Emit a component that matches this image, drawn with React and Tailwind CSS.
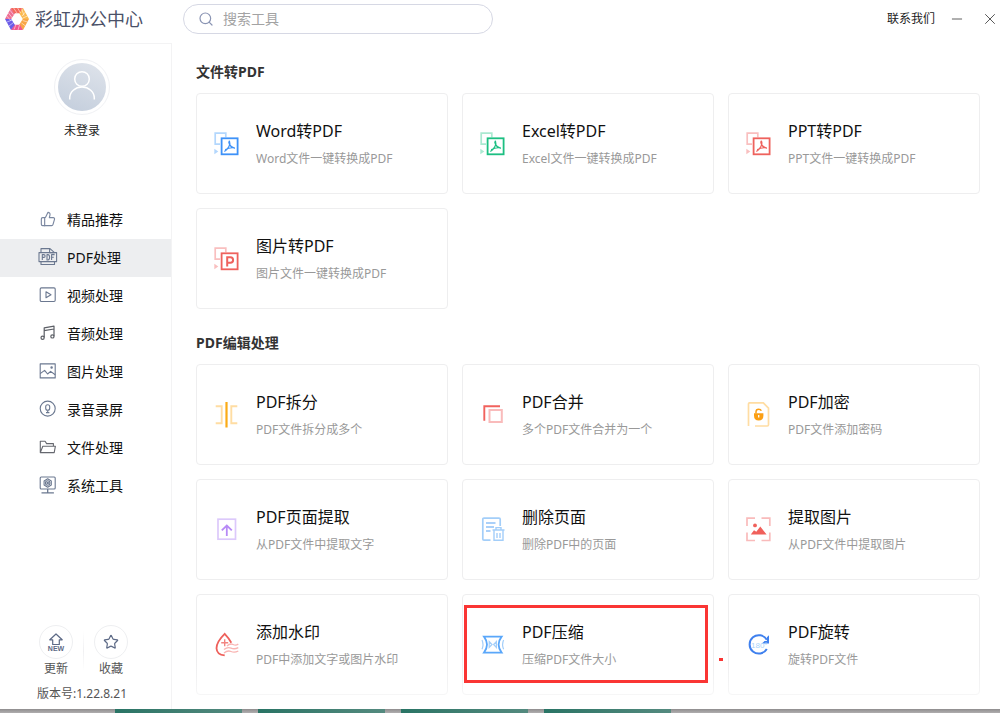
import { Minus, Search, Star, ThumbsUp, X } from 'lucide-react'

/* ── Sidebar icons ─────────────────────────────────────────────────────── */
function NavSvg({ children, color = '#6b7890' }) {
  return (
    <svg width="20" height="20" viewBox="0 0 20 20" fill="none" stroke={color} strokeWidth="1.1"
      strokeLinejoin="round" className="shrink-0" aria-hidden="true">
      {children}
    </svg>
  )
}

const LikeIcon = () => (
  <span className="flex w-5 shrink-0 justify-center">
    <ThumbsUp size={16} strokeWidth={1.7} color="#7a87a0" aria-hidden="true" />
  </span>
)

const PdfIcon = () => (
  <NavSvg>
    <path d="M3 5.5V1.6h9l4.5 4M11.6 1.6v4h5M3 14.5v3h13.5v-3M3 5.5h13.5" />
    <rect x="1" y="5.6" width="17.6" height="9" />
    <path d="M4.3 13V7.6h1.5q1.3 0 1.3 1.4t-1.3 1.4H4.3M9 7.6V13h1q1.6-.2 1.6-2.7T10 7.6zM13.6 13V7.6h3M13.6 10.2h2.2" />
  </NavSvg>
)

const VideoIcon = () => (
  <NavSvg>
    <rect x="2.2" y="2.9" width="15" height="13.6" rx="1.2" />
    <path d="M8 6.8v6l5-3z" />
  </NavSvg>
)

const MusicIcon = () => (
  <NavSvg color="#5c5f66">
    <path d="M6.2 14.6V4.8L16 3.2v10M6.2 7.6L16 6" strokeWidth="1.2" />
    <circle cx="4.6" cy="14.8" r="1.6" strokeWidth="1.2" />
    <circle cx="14.4" cy="13.4" r="1.6" strokeWidth="1.2" />
  </NavSvg>
)

const ImageIcon = () => (
  <NavSvg>
    <rect x="2.2" y="2.9" width="15" height="14" />
    <path d="M2.2 12.6 6.6 9.4l3 3.6 3-2.6 4.6 3.4" />
    <circle cx="13.6" cy="6.4" r=".7" />
  </NavSvg>
)

const MicIcon = () => (
  <NavSvg>
    <circle cx="9.7" cy="9.6" r="7.5" />
    <rect x="7.7" y="5.8" width="4" height="5.4" rx="2" />
    <path d="M9.7 11.6V14M8 13.6h3.4" />
  </NavSvg>
)

const FolderIcon = () => (
  <NavSvg color="#66686f">
    <path d="M2.3 15.6V4.2h4.8l1.5 2.4h6.8v2.6M2.3 15.6 4.8 9.2h12.6l-1.2 6.4z" />
  </NavSvg>
)

const SystemIcon = () => (
  <NavSvg>
    <rect x="2.2" y="2" width="15" height="12" rx="1" />
    <path d="M9.7 3.8l3.6 2.1v4.2l-3.6 2.1-3.6-2.1V5.9z" />
    <circle cx="9.7" cy="8" r="2.2" />
    <circle cx="9.7" cy="8" r=".7" />
    <path d="M9.7 14v3.6M3.5 17.8h12.4" strokeWidth="1.3" />
  </NavSvg>
)

/* ── Card icons ────────────────────────────────────────────────────────── */
function CardSvg({ children }) {
  return (
    <svg width="26" height="26" viewBox="0 0 26 26" fill="none" className="shrink-0" aria-hidden="true">
      {children}
    </svg>
  )
}

function ConvertIcon({ dark, light, letter }) {
  return (
    <CardSvg>
      <path d="M7 13.2H2.2v-11h10.6v4" stroke={light} strokeWidth="1.7" />
      <path d="M1.3 17.8v5.4l4-2.7z" fill={light} />
      <rect x="8.6" y="7.3" width="16" height="16" stroke={dark} strokeWidth="1.8" />
      {letter ? (
        <path d="M14.2 20.6v-9.4h3.2q2.7 0 2.7 2.8t-2.7 2.8h-3.2" stroke={dark} strokeWidth="2" />
      ) : (
        <path d="M16.2 10.2q-.9 1.2.3 3.2 1.7 3.2 5 3.7M16.5 10.2q1 2.200-.6 5.400-1.500 3-4.200 4.600M12.600 18.600q3.800-2.400 8.800-1.700"
          stroke={dark} strokeWidth="1.2" strokeLinecap="round" />
      )}
    </CardSvg>
  )
}

const SplitIcon = () => (
  <CardSvg>
    <path d="M2.7 4.2h6v17h-6M24.3 4.2h-6v17h6" stroke="#ffdda3" strokeWidth="1.9" />
    <path d="M13.5 0v25.500" stroke="#fbab15" strokeWidth="2.2" />
  </CardSvg>
)

const MergeIcon = () => (
  <CardSvg>
    <path d="M5.3 18.7V4.2H21" stroke="#f1625d" strokeWidth="1.9" />
    <rect x="10.5" y="8" width="12.3" height="12" stroke="#f9bbbb" strokeWidth="2" />
  </CardSvg>
)

const LockIcon = () => (
  <CardSvg>
    <path d="M3.5 24V2q0-1.2 1.2-1.2h13.600l5.200 5.400v16.600q0 1.200-1.200 1.200H10" stroke="#ffdda3" strokeWidth="1.7" />
    <path d="M9 11.3h9.4v2.4q0 4.7-4.7 4.7T9 13.7z" fill="#fb9f14" />
    <path d="M11 11.5V9.8q0-2.6 2.7-2.6 2 0 2.6 1.6" stroke="#fb9f14" strokeWidth="1.5" />
    <path d="M13.7 13v2.6" stroke="#fff" strokeWidth="1.3" />
  </CardSvg>
)

const PageExtractIcon = () => (
  <CardSvg>
    <rect x="5" y="2.2" width="17.5" height="20" stroke="#dcc9fb" strokeWidth="1.7" />
    <path d="M13.8 19V8.600M8.800 13.400l5-4.900 5 4.900" stroke="#b78af6" strokeWidth="1.8" />
  </CardSvg>
)

const DeletePageIcon = () => (
  <CardSvg>
    <path d="M11.5 23.2H5q-1.2 0-1.2-1.2V2.3q0-1.2 1.2-1.2h15q1.2 0 1.2 1.2V9" stroke="#a3cef9" strokeWidth="1.7" />
    <path d="M7 6h9.5M7 10h8M7 14h4.5" stroke="#8fc1f7" strokeWidth="1.4" />
    <path d="M13.5 13h12M17 12.8v-2.200h5v2.200M15 13.200v10h9v-10M18 16v5M21 16v5" stroke="#a3cef9" strokeWidth="1.4" />
  </CardSvg>
)

const PictureExtractIcon = () => (
  <CardSvg>
    <path d="M2 9V1.200h8M16.500 1.200h8.300V9M24.800 15.500v8h-8.300M10 23.500H2v-8" stroke="#f9bbbb" strokeWidth="1.7" />
    <path d="M5.800 17.400 9 13.200l2.300 1.600 4-5.200 6.300 7.800z" fill="#f0605b" />
    <circle cx="10" cy="8.400" r="1.900" fill="#f0605b" />
  </CardSvg>
)

const WatermarkIcon = () => (
  <CardSvg>
    <path d="M18.3 10.8Q15.6 5.8 11.7 1.8 3.5 9.8 3.5 16.2q.3 6.4 8.2 7.2" stroke="#ee605b" strokeWidth="1.8" />
    <path d="M11.7 7.2v7M8.2 10.700h7" stroke="#f28480" strokeWidth="1.4" />
    <path d="M14 14q3-3 6-1.500t5.300-.5M11 17.600q3.500-3 7-1.500t7.300-.5M11 21q3.500-3 7-1.500t7.300-.5" stroke="#f9b4b2" strokeWidth="1.3" />
  </CardSvg>
)

const CompressIcon = () => (
  <CardSvg>
    <path d="M5 4.600h17.600q-3 4-3 8t3 8H5q3-4 3-8t-3-8z" stroke="#5aa7fa" strokeWidth="1.8" />
    <path d="M3 8q2 4.600 0 9.200M24.600 8q-2 4.600 0 9.200M10.200 9.500v6l2.800-3zM17.400 9.500v6l-2.800-3z" stroke="#a3cef9" strokeWidth="1.2" />
  </CardSvg>
)

const RotateIcon = () => (
  <CardSvg>
    <path d="M21.800 7.800A9.200 9.200 0 1 0 21.800 17" stroke="#3f80ee" strokeWidth="2" />
    <path d="M24 3.200v8.400h-7.200L19.500 9h2.400V5.300z" fill="#3f80ee" />
    <text x="6" y="15.500" fontSize="8" fontFamily="Liberation Sans, sans-serif" fill="#a9d4fb">180°</text>
  </CardSvg>
)

/* ── Data ──────────────────────────────────────────────────────────────── */
const NAV = [
  { label: '精品推荐', Icon: LikeIcon },
  { label: 'PDF处理', Icon: PdfIcon, active: true },
  { label: '视频处理', Icon: VideoIcon },
  { label: '音频处理', Icon: MusicIcon },
  { label: '图片处理', Icon: ImageIcon },
  { label: '录音录屏', Icon: MicIcon },
  { label: '文件处理', Icon: FolderIcon },
  { label: '系统工具', Icon: SystemIcon },
]

const SECTIONS = [
  {
    title: '文件转PDF',
    tools: [
      { name: 'Word转PDF', desc: 'Word文件一键转换成PDF', icon: <ConvertIcon dark="#3e92f8" light="#b3d7fd" /> },
      { name: 'Excel转PDF', desc: 'Excel文件一键转换成PDF', icon: <ConvertIcon dark="#1dbf82" light="#abe9d1" /> },
      { name: 'PPT转PDF', desc: 'PPT文件一键转换成PDF', icon: <ConvertIcon dark="#ee625d" light="#f9bfbf" /> },
      { name: '图片转PDF', desc: '图片文件一键转换成PDF', icon: <ConvertIcon dark="#ee625d" light="#f9bfbf" letter /> },
    ],
  },
  {
    title: 'PDF编辑处理',
    tools: [
      { name: 'PDF拆分', desc: 'PDF文件拆分成多个', icon: <SplitIcon /> },
      { name: 'PDF合并', desc: '多个PDF文件合并为一个', icon: <MergeIcon /> },
      { name: 'PDF加密', desc: 'PDF文件添加密码', icon: <LockIcon /> },
      { name: 'PDF页面提取', desc: '从PDF文件中提取文字', icon: <PageExtractIcon /> },
      { name: '删除页面', desc: '删除PDF中的页面', icon: <DeletePageIcon /> },
      { name: '提取图片', desc: '从PDF文件中提取图片', icon: <PictureExtractIcon /> },
      { name: '添加水印', desc: 'PDF中添加文字或图片水印', icon: <WatermarkIcon /> },
      { name: 'PDF压缩', desc: '压缩PDF文件大小', icon: <CompressIcon />, marked: true },
      { name: 'PDF旋转', desc: '旋转PDF文件', icon: <RotateIcon /> },
    ],
  },
]

/* ── Header ────────────────────────────────────────────────────────────── */
function Logo() {
  // hexagon ring, one quad per side, with thin white stripes over it
  return (
    <svg width="24" height="22" viewBox="0 0 24 22" className="shrink-0" aria-hidden="true">
      <path d="M0 11 6 0l4 5.2L6.2 11z" fill="#ee6f94" />
      <path d="M6 0h12l-3 5.2H9z" fill="#f4685c" />
      <path d="M18 0l6 11h-6.2l-3.6-5.8z" fill="#fbb94f" />
      <path d="M24 11l-6 11-3.8-5.2 3.6-5.8z" fill="#f9a646" />
      <path d="M18 22H6l3-5.2h6z" fill="#f0568e" />
      <path d="M6 22 0 11h6.2l3.6 5.8z" fill="#6b5ce8" />
      <path d="M1.8 8l4.4 5M3.4 5l4 5M5 2.200l3.500 4.600M8.600 0 12 5M12.600 0l3 5M16.600.5l2.400 7M2 14l5-2M4 18l4.500-3.500M9 21.500l2-5M13 22l1.500-5M20.500 4 17 8M22.600 8l-4.800 2M22.600 14l-5-1.500M20.500 18l-4-3"
        stroke="#fff" strokeWidth=".7" strokeOpacity=".75" />
    </svg>
  )
}

function Header() {
  return (
    <header className="flex h-[43px] shrink-0 items-center pb-[5px]">
      <div className="flex w-[183px] shrink-0 items-center gap-[6px] pl-[5px]">
        <Logo />
        <h1 className="text-[18px] leading-6 text-[#4a5168]">彩虹办公中心</h1>
      </div>
      <label className="flex h-[30px] w-[310px] items-center gap-[9px] rounded-full border border-[#d6d8e4] pl-[14px]">
        <Search size={16} strokeWidth={1.8} color="#8a94b3" aria-hidden="true" />
        <input type="text" aria-label="搜索工具" placeholder="搜索工具"
          className="min-w-0 flex-1 bg-transparent text-[14px] leading-5 outline-none placeholder:text-[#a3a3a3]" />
      </label>
      <div className="ml-auto flex items-center pr-px">
        <a href="#contact" className="text-[12px] leading-5 text-[#222]">联系我们</a>
        <button type="button" aria-label="最小化" className="ml-[14px]"><Minus size={16} strokeWidth={1.4} color="#555" /></button>
        <button type="button" aria-label="关闭" className="ml-4"><X size={18} strokeWidth={1.3} color="#555" /></button>
      </div>
    </header>
  )
}

/* ── Sidebar ───────────────────────────────────────────────────────────── */
function Sidebar() {
  return (
    <aside className="flex w-[172px] shrink-0 flex-col border-t border-r border-[#f3f3f4] pt-[15px] pb-[7px]">
      <div className="ml-[54px] flex w-14 flex-col items-center">
        <div className="rounded-full border border-[#f0f1f4] p-[3px]">
          <svg width="48" height="48" viewBox="0 0 48 48" fill="none" aria-hidden="true">
            <defs>
              <linearGradient id="avatar" x1=".7" y1="0" x2=".3" y2="1">
                <stop offset="0" stopColor="#dde2ea" />
                <stop offset="1" stopColor="#c5cfdd" />
              </linearGradient>
            </defs>
            <circle cx="24" cy="24" r="24" fill="url(#avatar)" />
            <circle cx="24" cy="16" r="7.3" stroke="#fff" strokeWidth="1.5" />
            <path d="M11.7 36.5V35a12.300 11 0 0 1 24.600 0v1.500" stroke="#fff" strokeWidth="1.5" />
          </svg>
        </div>
        <span className="mt-[6px] text-[12px] leading-5 whitespace-nowrap text-[#222]">未登录</span>
      </div>

      <nav className="mt-[60px]">
        {NAV.map(({ label, Icon, active }) => (
          <a key={label} href="#nav" aria-current={active ? 'page' : undefined}
            className={`flex h-[38px] items-center gap-[9px] pb-[2px] pl-[38px] text-[14px] text-[#111] ${active ? 'bg-[#edeef0]' : ''}`}>
            <Icon />
            {label}
          </a>
        ))}
      </nav>

      <div className="mt-auto">
        <div className="flex items-start gap-[10px] pl-[39px]">
          <SideButton label="更新">
            <svg width="18" height="20" viewBox="0 0 18 20" fill="none" stroke="#5d6a86" aria-hidden="true">
              <path d="M9 2 2.8 7.8h2.900v4.700h6.600V7.800h2.900z" strokeWidth="1.2" strokeLinejoin="round" />
              <text x="9" y="19" textAnchor="middle" fontSize="7" fontWeight="700" stroke="none" fill="#5d6a86"
                fontFamily="Liberation Sans, sans-serif">NEW</text>
            </svg>
          </SideButton>
          <span className="mt-[6px] h-10 w-px bg-linear-to-b from-white via-[#f0f0f2] to-white" />
          <SideButton label="收藏"><Star size={16} strokeWidth={1.8} color="#5d6a86" aria-hidden="true" /></SideButton>
        </div>
        <p className="mt-[9px] pl-[37px] text-[12px] leading-4 text-[#555]">版本号:1.22.8.21</p>
      </div>
    </aside>
  )
}

function SideButton({ label, children }) {
  return (
    <button type="button" className="flex w-[34px] flex-col items-center gap-[2px] text-[12px] leading-4 text-[#555]">
      <span className="flex size-[34px] items-center justify-center rounded-full border border-[#eeeff1]">{children}</span>
      {label}
    </button>
  )
}

/* ── Tool grid ─────────────────────────────────────────────────────────── */
function ToolCard({ name, desc, icon, marked }) {
  return (
    <a href="#tool" className="relative flex items-center gap-[17px] rounded-[4px] border border-[#eeeeef] pt-[25px] pb-6 pl-4">
      {icon}
      <span className="flex flex-col gap-[6px]">
        <span className="text-[16px] leading-6 text-[#111]">{name}</span>
        <span className="text-[12px] leading-5 text-[#999]">{desc}</span>
      </span>
      {marked && (
        <>
          <span className="absolute top-[10px] right-[5px] bottom-[11px] left-px z-10 border-3 border-[#fa3534]" />
          <span className="absolute top-[63px] -right-[10px] h-[3px] w-1 bg-[#fa3534]" />
        </>
      )}
    </a>
  )
}

function Section({ title, tools }) {
  return (
    <section>
      <h2 className="text-[14px] leading-5 font-bold text-[#333]">{title}</h2>
      <div className="mt-[11px] grid grid-cols-3 gap-[14px]">
        {tools.map(t => <ToolCard key={t.name} {...t} />)}
      </div>
    </section>
  )
}

// Strip of the desktop that shows below the window
function Backdrop() {
  return (
    <div className="flex h-1 shrink-0 gap-4 bg-linear-to-b from-[#8f8d8e] to-[#b0aeaf] pl-[115px]">
      {[0, 1, 2, 3].map(i => (
        <span key={i} className="w-[127px] bg-linear-to-r from-[#297465] to-[#548a7f]" />
      ))}
    </div>
  )
}

export default function App() {
  return (
    <div className="flex min-h-screen flex-col bg-white font-['Noto_Sans','Noto_Sans_CJK_SC',sans-serif]">
      <Header />
      <div className="flex flex-1">
        <Sidebar />
        <main className="relative flex flex-1 flex-col gap-6 pt-[19px] pr-5 pb-[14px] pl-6">
          {SECTIONS.map(s => <Section key={s.title} {...s} />)}
          <div className="pointer-events-none absolute inset-x-0 bottom-0 h-12 bg-linear-to-t from-white/70 to-transparent" />
        </main>
      </div>
      <Backdrop />
    </div>
  )
}
